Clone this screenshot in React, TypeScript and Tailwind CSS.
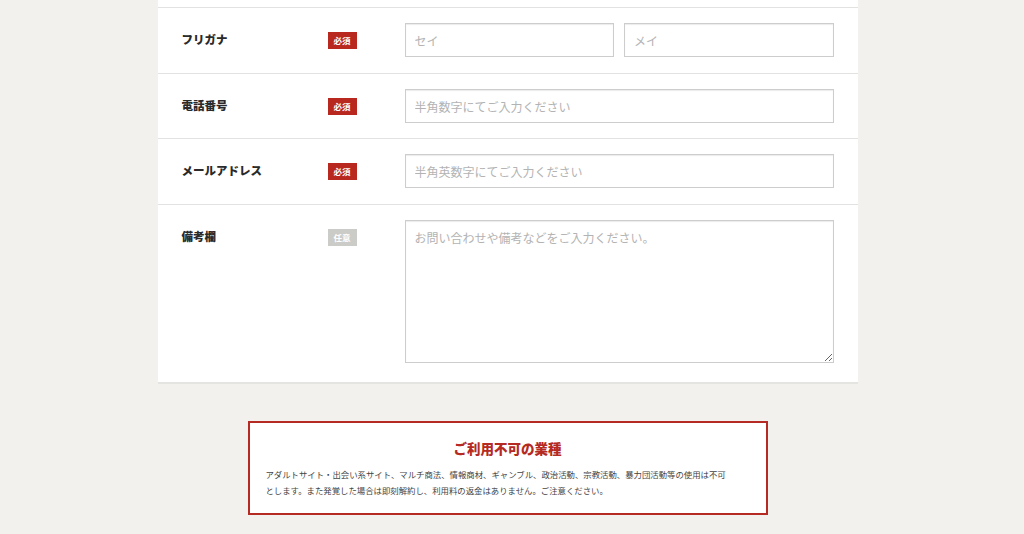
import React from "react";

const font = { fontFamily: '"Noto Sans CJK JP", "Noto Sans", sans-serif' };

function Badge({ required }: { required: boolean }) {
  return (
    <span
      className={`inline-flex h-[17px] w-[29px] items-center justify-center text-[8.5px] font-bold leading-none text-white ${
        required ? "bg-[#b8281f]" : "bg-[#cbcbc7]"
      }`}
    >
      {required ? "必須" : "任意"}
    </span>
  );
}

function Input({ placeholder }: { placeholder: string }) {
  return (
    <input
      type="text"
      placeholder={placeholder}
      className="block h-[34px] w-full min-w-0 border border-[#cdcdcd] bg-white px-[9px] text-[12px] text-[#333] shadow-[inset_0_1px_1px_rgba(0,0,0,0.08)] outline-none placeholder:text-[#b3b3b3]"
    />
  );
}

function Row({
  label,
  required,
  children,
  pb,
}: {
  label: string;
  required: boolean;
  children: React.ReactNode;
  pb: string;
}) {
  return (
    <div className={`flex items-start px-[24px] pt-[15px] ${pb}`}>
      <div className="flex h-[34px] w-[146px] shrink-0 items-center text-[11.5px] font-extrabold text-[#2a2a2a]">
        {label}
      </div>
      <div className="flex h-[34px] w-[77px] shrink-0 items-center">
        <Badge required={required} />
      </div>
      <div className="flex min-w-0 flex-1 gap-[10px]">{children}</div>
    </div>
  );
}

export default function App() {
  return (
    <div className="min-h-[534px] bg-[#f2f1ed] pr-[9px]" style={font}>
      <div className="mx-auto w-[700px]">
        <div className="border-b-2 border-[#e4e4e1] bg-white">
          <div className="h-[8px] border-b border-[#e2e2e0]" />
          <Row label="フリガナ" required pb="pb-[16px] border-b border-[#e2e2e0]">
            <Input placeholder="セイ" />
            <Input placeholder="メイ" />
          </Row>
          <Row label="電話番号" required pb="pb-[15px] border-b border-[#e2e2e0]">
            <Input placeholder="半角数字にてご入力ください" />
          </Row>
          <Row label="メールアドレス" required pb="pb-[16px] border-b border-[#e2e2e0]">
            <Input placeholder="半角英数字にてご入力ください" />
          </Row>
          <Row label="備考欄" required={false} pb="pb-[19px]">
            <textarea
              placeholder="お問い合わせや備考などをご入力ください。"
              className="block h-[143px] w-full border border-[#cdcdcd] bg-white px-[9px] py-[8px] text-[12px] text-[#333] shadow-[inset_0_1px_1px_rgba(0,0,0,0.08)] outline-none placeholder:text-[#b3b3b3]"
            />
          </Row>
        </div>

        <div className="mx-auto mt-[37px] w-[520px] border-2 border-[#b52a22] bg-white px-[16px] pb-[15px] pt-[15px]">
          <h2 className="text-center text-[13.5px] font-black leading-[20px] text-[#b52a22]">
            ご利用不可の業種
          </h2>
          <p className="mt-[8px] text-[8.4px] leading-[16px] text-[#444]">
            アダルトサイト・出会い系サイト、マルチ商法、情報商材、ギャンブル、政治活動、宗教活動、暴力団活動等の使用は不可
            <br />
            とします。また発覚した場合は即刻解約し、利用料の返金はありません。ご注意ください。
          </p>
        </div>
      </div>
    </div>
  );
}
